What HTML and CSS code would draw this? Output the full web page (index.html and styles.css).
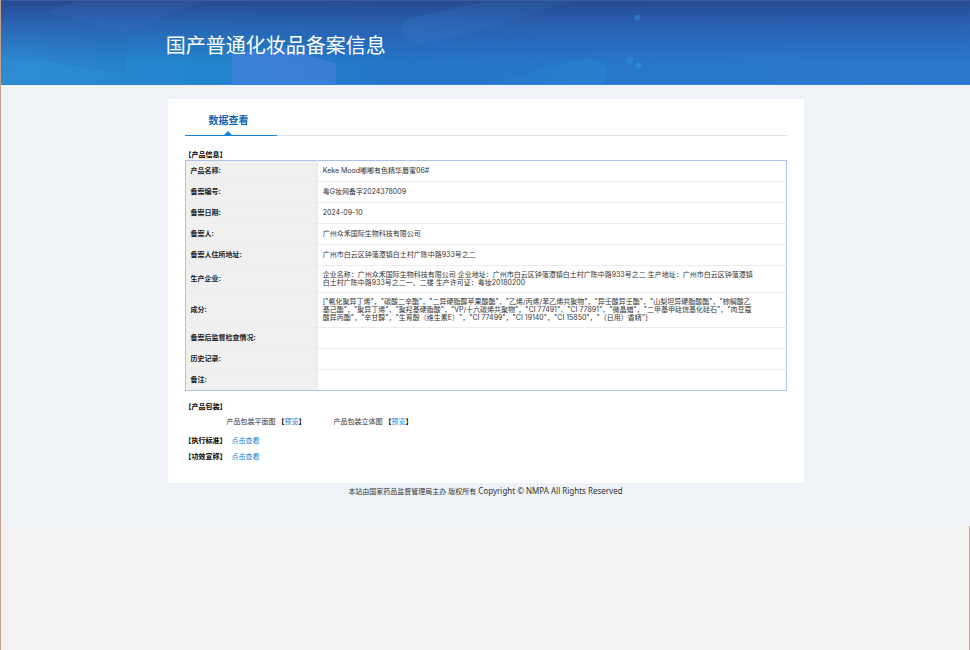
FILE: index.html
```html
<!DOCTYPE html>
<html lang="zh-CN">
<head>
    <meta charset="UTF-8">
    <meta name="viewport" content="width=device-width, initial-scale=1.0">
    <title>国产普通化妆品备案信息</title>
    <link rel="stylesheet" href="styles.css">
</head>
<body>
    <div class="page">
        <header class="banner">
            <svg class="banner-bg" viewBox="0 0 970 85" preserveAspectRatio="none" aria-hidden="true">
                <defs>
                    <linearGradient id="pill" x1="0" y1="0" x2="1" y2="0">
                        <stop offset="0" stop-color="#3a86d0" stop-opacity="0.2"/>
                        <stop offset="1" stop-color="#3a86d0" stop-opacity="0.1"/>
                    </linearGradient>
                    <linearGradient id="pill2" x1="0" y1="0" x2="1" y2="0">
                        <stop offset="0" stop-color="#2a93d8" stop-opacity="0.1"/>
                        <stop offset="1" stop-color="#2a93d8" stop-opacity="0.3"/>
                    </linearGradient>
                </defs>
                <path d="M46 11L78 0H205L125 32Z" fill="#4a6fd0" opacity="0.15"/>
                <path d="M46 13L125 33V75L46 62Z" fill="#2c62b8" opacity="0.12"/>
                <path d="M0 70L46 62L125 75L90 85H0Z" fill="#3ba0e0" opacity="0.1"/>
                <path d="M231 85V54L285 48L335 64V85Z" fill="#4a7fe0" opacity="0.65"/>
                <path d="M440 11L485 0H570L485 28L425 43C405 45 398 32 402 24C406 17 420 15 440 11Z" fill="url(#pill)"/>
                <path d="M500 82L572 61C590 56 607 63 607 73C607 79 604 82 601 85H490Z" fill="url(#pill2)"/>
                <circle cx="637" cy="17" r="3" fill="#2f7fd0" opacity="0.7"/>
                <circle cx="629" cy="61" r="4" fill="#2b8ade" opacity="0.6"/>
                <circle cx="638" cy="66" r="3" fill="#2a90ee" opacity="0.7"/>
            </svg>
            <h1>国产普通化妆品备案信息</h1>
        </header>

        <main class="card">
            <div class="tabs">
                <a href="#info" class="tab">数据查看</a>
            </div>

            <h2 class="section-title">【产品信息】</h2>
            <table id="info" class="info">
                <tbody>
                    <tr>
                        <th scope="row">产品名称:</th>
                        <td>Keke Mood嘟嘟有色精华唇蜜06#</td>
                    </tr>
                    <tr>
                        <th scope="row">备案编号:</th>
                        <td>粤G妆网备字2024378009</td>
                    </tr>
                    <tr>
                        <th scope="row">备案日期:</th>
                        <td>2024-09-10</td>
                    </tr>
                    <tr>
                        <th scope="row">备案人:</th>
                        <td>广州众禾国际生物科技有限公司</td>
                    </tr>
                    <tr>
                        <th scope="row">备案人住所地址:</th>
                        <td>广州市白云区钟落潭镇白土村广陈中路933号之二</td>
                    </tr>
                    <tr>
                        <th scope="row">生产企业:</th>
                        <td>企业名称：广州众禾国际生物科技有限公司 企业地址：广州市白云区钟落潭镇白土村广陈中路933号之二 生产地址：广州市白云区钟落潭镇白土村广陈中路933号之二一、二楼 生产许可证：粤妆20180200</td>
                    </tr>
                    <tr>
                        <th scope="row">成分:</th>
                        <td>["氨化聚异丁烯"，"碳酸二辛酯"，"二异硬脂醇苹果酸酯"，"乙烯/丙烯/苯乙烯共聚物"，"异壬酸异壬酯"，"山梨坦异硬脂酸酯"，"棕榈酸乙<br>基己酯"，"聚异丁烯"，"聚羟基硬脂酸"，"VP/十六碳烯共聚物"，"CI 77491"，"CI 77891"，"微晶蜡"，"二甲基甲硅烷基化硅石"，"肉豆蔻<br>酸异丙酯"，"辛甘醇"，"生育酚（维生素E）"，"CI 77499"，"CI 19140"，"CI 15850"，"（日用）香精"]</td>
                    </tr>
                    <tr>
                        <th scope="row">备案后监督检查情况:</th>
                        <td></td>
                    </tr>
                    <tr>
                        <th scope="row">历史记录:</th>
                        <td></td>
                    </tr>
                    <tr>
                        <th scope="row">备注:</th>
                        <td></td>
                    </tr>
                </tbody>
            </table>

            <h2 class="section-title package-title">【产品包装】</h2>
            <div class="package">
                <span>产品包装平面图 <b>【</b><a href="#">预览</a><b>】</b></span>
                <span>产品包装立体图 <b>【</b><a href="#">预览</a><b>】</b></span>
            </div>
            <div class="link-row"><b>【执行标准】</b><a href="#">点击查看</a></div>
            <div class="link-row"><b>【功效宣称】</b><a href="#">点击查看</a></div>
        </main>

        <footer class="footer">本站由国家药品监督管理局主办 版权所有 <span class="copyright">Copyright © NMPA All Rights Reserved</span></footer>
    </div>
    <div class="rest"></div>
</body>
</html>
```
FILE: styles.css
```css
* {
    box-sizing: border-box;
}
body {
    display: flex;
    flex-direction: column;
    min-height: 100vh;
    margin: 0;
    border-left: 1px solid #c6a28c;
    background-color: #f2f2f2;
    color: #333;
    font-family: Inter, "Noto Sans CJK SC", sans-serif;
    font-size: 7px;
    line-height: 8px;
}
a {
    color: #1482d8;
    text-decoration: none;
}
.page {
    background-color: #eff3f7;
    padding-bottom: 29px;
}
.rest {
    flex: 1;
    border-right: 1px solid #b5a698;
}
.banner {
    position: relative;
    height: 85px;
    padding: 31px 17% 0;
    border-top: 1px solid #3a5b9f;
    border-bottom: 1px solid #2f83d0;
    background: linear-gradient(rgba(39, 74, 145, 1), rgba(42, 88, 168, 0.75) 28%, rgba(40, 110, 200, 0) 75%),
                linear-gradient(90deg, #2d8ad2, #1f84cc 24%, #2475c9 40%, #2a78cf);
}
.banner-bg {
    position: absolute;
    top: 0;
    left: 0;
    width: 100%;
    height: 100%;
}
.banner h1 {
    position: relative;
    margin: 0;
    color: #fff;
    font-size: 20px;
    font-weight: 400;
    line-height: 28px;
}
.card {
    width: 66%;
    max-width: 636px;
    margin: 14px auto 0;
    padding: 10px 17px 14px;
    background-color: #fff;
}
.tabs {
    display: flex;
    border-bottom: 1px solid #dfe3e8;
}
.tab {
    position: relative;
    width: 92px;
    margin-bottom: -1px;
    padding: 4px 0 8px 24px;
    border-bottom: 1px solid #1482d8;
    color: #0f62ae;
    font-size: 10px;
    font-weight: bold;
    line-height: 14px;
}
.tab::after {
    content: "";
    position: absolute;
    bottom: 0;
    left: 39px;
    border: 4px solid transparent;
    border-top: 0;
    border-bottom-color: #1482d8;
}
.section-title {
    margin: 14px 0 0;
    color: #000;
    font-size: 7px;
    line-height: 10px;
}
.info {
    width: 100%;
    border: 1px solid #a9c4e6;
    border-collapse: collapse;
}
.info th,
.info td {
    height: 21px;
    padding: 5px;
    border-bottom: 1px solid #ececec;
    text-align: left;
}
.info th {
    width: 22%;
    border-right: 1px solid #e8e8e8;
    background-color: #f0f0f0;
    color: #222;
}
.info td {
    padding-right: 30px;
}
.info tr:last-child th,
.info tr:last-child td {
    border-bottom-color: #a9c4e6;
}
.package-title {
    margin-top: 11px;
}
.package {
    display: flex;
    gap: 28px;
    margin: 6px 0 11px 42px;
}
.link-row {
    display: flex;
    gap: 5px;
    margin-bottom: 8px;
}
.package b,
.link-row b {
    color: #000;
}
.footer {
    padding-top: 3px;
    line-height: 10px;
    text-align: center;
}
.copyright {
    font-family: "Noto Sans", sans-serif;
    font-size: 8px;
}
```
